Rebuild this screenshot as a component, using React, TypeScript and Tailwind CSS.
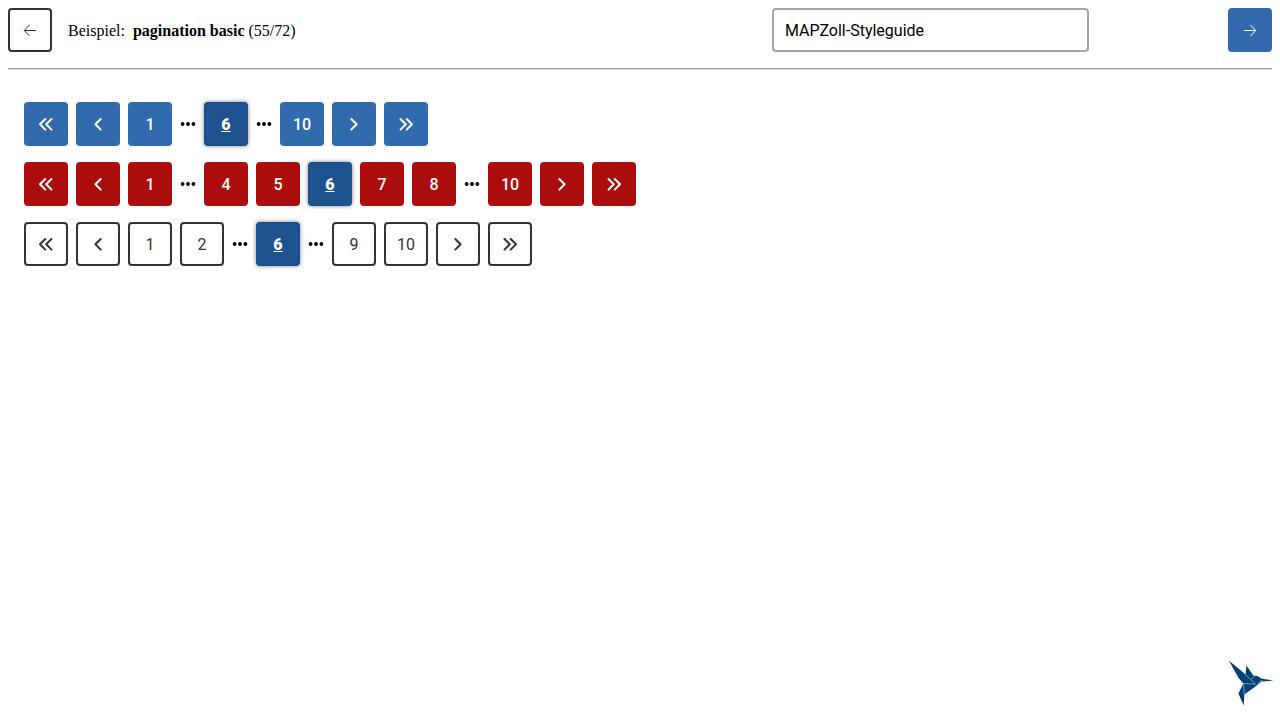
import type { ReactNode } from "react";

type Variant = "primary" | "danger" | "outline";
type Item = number | "first" | "prev" | "next" | "last" | "gap";

const variants: Record<Variant, string> = {
  primary: "bg-[#316bae] text-white font-medium",
  danger: "bg-[#ab0d0d] text-white font-medium",
  outline: "border-2 border-[#333333] bg-white text-[#333333]",
};

const chevrons = {
  first: { label: "Erste Seite", d: "M8.3 3 3 8.3 8.3 13.6M14.5 3 9.2 8.3 14.5 13.6" },
  prev: { label: "Vorherige Seite", d: "M11.7 3 6.4 8.3 11.7 13.6" },
  next: { label: "Nächste Seite", d: "M6.3 3 11.6 8.3 6.3 13.6" },
  last: { label: "Letzte Seite", d: "M3.5 3 8.8 8.3 3.5 13.6M9.7 3 15 8.3 9.7 13.6" },
};

function Arrow({ d }: { d: string }) {
  return (
    <svg viewBox="0 0 14 14" className="size-3.5" fill="none" stroke="currentColor" aria-hidden="true">
      <path d={d} />
    </svg>
  );
}

function PageButton({
  className,
  label,
  current,
  children,
}: {
  className: string;
  label: string;
  current?: boolean;
  children: ReactNode;
}) {
  return (
    <button
      type="button"
      aria-label={label}
      aria-current={current ? "page" : undefined}
      className={`flex size-11 items-center justify-center rounded pt-0.5 ${className}`}
    >
      {children}
    </button>
  );
}

function Pagination({ label, variant, items }: { label: string; variant: Variant; items: Item[] }) {
  return (
    <nav aria-label={label}>
      <ul className="flex flex-wrap items-center gap-2">
        {items.map((item, index) => {
          if (item === "gap") {
            return (
              <li key={index} className="text-black">
                <svg viewBox="0 0 16 16" className="size-4" fill="currentColor" aria-hidden="true">
                  <circle cx="2.6" cy="8" r="1.9" />
                  <circle cx="8" cy="8" r="1.9" />
                  <circle cx="13.4" cy="8" r="1.9" />
                </svg>
              </li>
            );
          }
          if (typeof item === "number") {
            const current = item === 6;
            return (
              <li key={index}>
                <PageButton
                  label={`Seite ${item}`}
                  current={current}
                  className={
                    current
                      ? "bg-[#1e528e] font-black text-white underline shadow-[0_0_4px_rgba(0,0,0,0.5)]"
                      : variants[variant]
                  }
                >
                  {item}
                </PageButton>
              </li>
            );
          }
          return (
            <li key={index}>
              <PageButton label={chevrons[item].label} className={variants[variant]}>
                <svg
                  viewBox="0 0 18 18"
                  className="size-4.5 shrink-0"
                  fill="none"
                  stroke="currentColor"
                  strokeWidth="2"
                  strokeLinecap="round"
                  strokeLinejoin="round"
                  aria-hidden="true"
                >
                  <path d={chevrons[item].d} />
                </svg>
              </PageButton>
            </li>
          );
        })}
      </ul>
    </nav>
  );
}

function Hummingbird() {
  return (
    <svg viewBox="0 0 48 48" className="size-12" aria-hidden="true">
      <path
        fill="#004178"
        d="M2.8 2.6 19.6 16.6 20.4 7.4 27.6 17.8C30.5 17.3 33.2 18.1 34.8 20.6L47.6 22.5 35.6 23.6 30.8 27.4 18.4 36.4 17.7 47.4 12.4 35.4 17.3 25.4 12.6 20Z"
      />
      <path
        d="M17.3 25.4 29.6 26.2M17.5 25.4 18.3 36.4M19.4 16.6 29.4 26M25 21.2 28.6 18.2M31.4 26.6C32.6 24 34.4 22.8 36.6 22.6"
        fill="none"
        stroke="#ffffff"
        strokeOpacity="0.75"
        strokeWidth="0.6"
      />
    </svg>
  );
}

export default function App() {
  return (
    <div className="flex min-h-screen flex-col bg-white p-2 font-['Roboto',sans-serif] text-base text-black">
      <header className="flex items-center">
        <button
          type="button"
          aria-label="Vorheriges Beispiel"
          className="flex size-11 items-center justify-center rounded border-2 border-[#333333] text-[#333333]"
        >
          <Arrow d="M13 7.5H1.5M6.5 2 1.3 7.5 6.5 13" />
        </button>
        <p className="ml-4 flex pt-0.5 font-['Liberation_Serif',serif]">
          <span className="mr-2">Beispiel:</span>
          <span>
            <strong>pagination basic</strong> (55/72)
          </span>
        </p>
        <input
          type="text"
          aria-label="Styleguide"
          defaultValue="MAPZoll-Styleguide"
          className="mr-[11%] ml-auto h-11 w-[317px] rounded border-2 border-[#a6a6a6] bg-white px-[11px]"
        />
        <button
          type="button"
          aria-label="Nächstes Beispiel"
          className="flex size-11 items-center justify-center rounded bg-[#316bae] text-white"
        >
          <Arrow d="M1 7.5H12.5M7.5 2 12.7 7.5 7.5 13" />
        </button>
      </header>
      <hr className="mt-4 border-t border-b border-t-[#9a9a9a] border-b-[#dddddd]" />
      <main className="flex flex-1 flex-col gap-4 px-4 pt-8">
        <Pagination
          label="Seiten kompakt"
          variant="primary"
          items={["first", "prev", 1, "gap", 6, "gap", 10, "next", "last"]}
        />
        <Pagination
          label="Seiten erweitert"
          variant="danger"
          items={["first", "prev", 1, "gap", 4, 5, 6, 7, 8, "gap", 10, "next", "last"]}
        />
        <Pagination
          label="Seiten umrandet"
          variant="outline"
          items={["first", "prev", 1, 2, "gap", 6, "gap", 9, 10, "next", "last"]}
        />
      </main>
      <footer className="-mr-0.5 flex justify-end pb-1.5">
        <Hummingbird />
      </footer>
    </div>
  );
}
